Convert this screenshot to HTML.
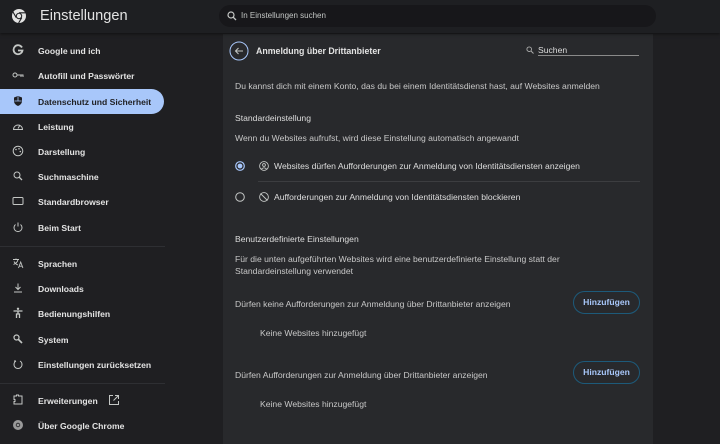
<!DOCTYPE html>
<html><head><meta charset="utf-8"><style>
*{margin:0;padding:0;box-sizing:border-box}
body{width:720px;height:444px;overflow:hidden;background:#1f1f22;font-family:"Liberation Sans",sans-serif;color:#e3e3e3;position:relative}
.hdr{position:absolute;left:0;top:0;width:720px;height:33px;background:#1e1f22;box-shadow:0 1px 3px rgba(0,0,0,.5);z-index:2}
.title{position:absolute;left:40px;top:8px;font-size:14.6px;color:#e3e3e3}
.search{position:absolute;left:219px;top:5px;width:437px;height:22px;border-radius:11px;background:#17171a}
.search span{position:absolute;left:22px;top:6px;font-size:8px;color:#c4c7c5}
.nav{position:absolute;left:0;top:33px;width:166px}
.it{position:absolute;left:0;height:25px;width:164px;font-size:8.6px;font-weight:bold;color:#e3e3e3}
.it .t{position:absolute;left:38px;top:8px}
.it svg{position:absolute;left:12px;top:6px}
.sel{background:#a8c7fa;border-radius:0 13px 13px 0;color:#1f1f22}
.sep{position:absolute;left:0;width:165px;height:1px;background:#2e2f33}
.card{position:absolute;left:223px;top:34px;width:430px;height:410px;background:#28292c}
.c{position:absolute;font-size:8.6px;color:#c8c8c8;white-space:nowrap}
.btn{position:absolute;left:573px;width:67px;height:23px;border:1px solid #1d5a7a;border-radius:12px;color:#a8c7fa;font-size:8.6px;font-weight:bold;text-align:center;line-height:21px}
</style></head><body>
<div class="hdr">
<svg style="position:absolute;left:11px;top:8px" width="16" height="16" viewBox="0 0 16 16"><circle cx="8" cy="8" r="7" fill="#e3e3e3"/><circle cx="8" cy="8" r="3.2" fill="#1e1f22"/><circle cx="8" cy="8" r="2.2" fill="#e3e3e3"/><path d="M8 4.8h6.5M5.2 9.6L2 4M10.8 9.6L7.6 15" stroke="#1e1f22" stroke-width="1.1"/></svg>
<div class="title">Einstellungen</div>
<div class="search"><svg style="position:absolute;left:8px;top:6px" width="10" height="10" viewBox="0 0 10 10"><circle cx="4" cy="4" r="3" fill="none" stroke="#c4c7c5" stroke-width="1.2"/><path d="M6.2 6.2L9 9" stroke="#c4c7c5" stroke-width="1.3"/></svg><span>In Einstellungen suchen</span></div>
</div>
<div class="nav">
<div class="it" style="top:5px"><svg width="12" height="12" viewBox="0 0 12 12"><path d="M10 3.5A4.5 4.5 0 1 0 10.5 6.5H6" fill="none" stroke="#c4c7c5" stroke-width="1.8"/></svg><span class="t">Google und ich</span></div>
<div class="it" style="top:30px"><svg width="12" height="12" viewBox="0 0 12 12"><circle cx="3" cy="6" r="2" fill="none" stroke="#c4c7c5"/><path d="M5 6h6.5M9 6v2M11 6v2" stroke="#c4c7c5"/></svg><span class="t">Autofill und Passwörter</span></div>
<div class="it sel" style="top:56px"><svg width="12" height="12" viewBox="0 0 12 12"><path d="M6 1L10 2.5V6c0 2.5-2 4.3-4 5C4 10.3 2 8.5 2 6V2.5z" fill="#1f1f22"/><path d="M6 1.5V6H9.6M6 6H2.4" stroke="#a8c7fa" stroke-width=".8" fill="none"/></svg><span class="t">Datenschutz und Sicherheit</span></div>
<div class="it" style="top:81px"><svg width="12" height="12" viewBox="0 0 12 12"><path d="M1.5 9.5a4.5 4.5 0 1 1 9 0z" fill="none" stroke="#c4c7c5"/><path d="M6 8.5L8 5" stroke="#c4c7c5"/></svg><span class="t">Leistung</span></div>
<div class="it" style="top:106px"><svg width="12" height="12" viewBox="0 0 12 12"><circle cx="6" cy="6" r="4.8" fill="none" stroke="#c4c7c5"/><circle cx="4" cy="4.5" r=".8" fill="#c4c7c5"/><circle cx="7" cy="3.8" r=".8" fill="#c4c7c5"/><circle cx="8.3" cy="6.5" r=".8" fill="#c4c7c5"/></svg><span class="t">Darstellung</span></div>
<div class="it" style="top:131px"><svg width="12" height="12" viewBox="0 0 12 12"><circle cx="5" cy="5" r="3" fill="none" stroke="#c4c7c5"/><path d="M7.2 7.2L10 10" stroke="#c4c7c5" stroke-width="1.3"/></svg><span class="t">Suchmaschine</span></div>
<div class="it" style="top:156px"><svg width="12" height="12" viewBox="0 0 12 12"><rect x="1" y="2.5" width="10" height="7" rx="1" fill="none" stroke="#c4c7c5"/></svg><span class="t">Standardbrowser</span></div>
<div class="it" style="top:182px"><svg width="12" height="12" viewBox="0 0 12 12"><path d="M3.5 3.5a4 4 0 1 0 5 0M6 1.5v4" fill="none" stroke="#c4c7c5"/></svg><span class="t">Beim Start</span></div>
<div class="sep" style="top:213px"></div>
<div class="it" style="top:218px"><svg width="12" height="12" viewBox="0 0 12 12"><path d="M1 2.5h6M4 1.5v1M2 4.5c1 2 2.5 3 4 3.5M6 2.5C5.5 5 4 6.5 1.5 7.5M6.5 11l2.2-6 2.2 6M7.3 9.2h2.8" fill="none" stroke="#c4c7c5" stroke-width=".9"/></svg><span class="t">Sprachen</span></div>
<div class="it" style="top:243px"><svg width="12" height="12" viewBox="0 0 12 12"><path d="M6 1.5v6M3.5 5L6 7.5 8.5 5M2 10h8" fill="none" stroke="#c4c7c5"/></svg><span class="t">Downloads</span></div>
<div class="it" style="top:268px"><svg width="12" height="12" viewBox="0 0 12 12"><circle cx="6" cy="1.8" r="1.2" fill="#c4c7c5"/><path d="M1.5 4h9M6 4v3.5M4.5 11V7h3v4" fill="none" stroke="#c4c7c5" stroke-width="1.3"/></svg><span class="t">Bedienungshilfen</span></div>
<div class="it" style="top:294px"><svg width="12" height="12" viewBox="0 0 12 12"><circle cx="4.5" cy="4.5" r="2.5" fill="none" stroke="#c4c7c5" stroke-width="1.2"/><path d="M6.5 6.5L10 10" stroke="#c4c7c5" stroke-width="1.6"/></svg><span class="t">System</span></div>
<div class="it" style="top:319px"><svg width="12" height="12" viewBox="0 0 12 12"><path d="M4 3a4 4 0 1 0 4 0M4 3H2" fill="none" stroke="#c4c7c5"/></svg><span class="t">Einstellungen zurücksetzen</span></div>
<div class="sep" style="top:350px"></div>
<div class="it" style="top:355px"><svg width="12" height="12" viewBox="0 0 12 12"><path d="M2 2h2.5v-1h2v1H10v8H2V7.5h1v-2H2z" fill="none" stroke="#c4c7c5"/></svg><span class="t">Erweiterungen</span><svg style="left:108px" width="12" height="12" viewBox="0 0 12 12"><path d="M5 1.5H1.5v9h9V7M7 1.5h3.5V5M10.5 1.5L5.5 6.5" fill="none" stroke="#c4c7c5"/></svg></div>
<div class="it" style="top:380px"><svg width="12" height="12" viewBox="0 0 12 12"><circle cx="6" cy="6" r="5" fill="#9a9a9a"/><circle cx="6" cy="6" r="2.2" fill="#1f1f22"/><circle cx="6" cy="6" r="1.4" fill="#9a9a9a"/></svg><span class="t">Über Google Chrome</span></div>
</div>
<div class="card"></div>
<svg style="position:absolute;left:229px;top:41px" width="20" height="20" viewBox="0 0 20 20"><circle cx="10" cy="10" r="9" fill="none" stroke="#a8c7fa" stroke-width="1"/><path d="M14 10H6.5M9.5 7L6.5 10l3 3" fill="none" stroke="#c4c7c5" stroke-width="1"/></svg>
<div class="c" style="left:256px;top:46px;font-size:8.8px;color:#e3e3e3;font-weight:bold">Anmeldung über Drittanbieter</div>
<svg style="position:absolute;left:526px;top:46px" width="8" height="8" viewBox="0 0 8 8"><circle cx="3.2" cy="3.2" r="2.3" fill="none" stroke="#aaa" stroke-width=".9"/><path d="M5 5l2.5 2.5" stroke="#aaa"/></svg>
<div class="c" style="left:538px;top:45px;color:#ddd">Suchen</div>
<div style="position:absolute;left:538px;top:55px;width:101px;height:1px;background:#8a8a8a"></div>
<div class="c" style="left:235px;top:81px">Du kannst dich mit einem Konto, das du bei einem Identitätsdienst hast, auf Websites anmelden</div>
<div class="c" style="left:235px;top:113px;color:#ddd">Standardeinstellung</div>
<div class="c" style="left:235px;top:133px">Wenn du Websites aufrufst, wird diese Einstellung automatisch angewandt</div>
<svg style="position:absolute;left:235px;top:161px" width="10" height="10"><circle cx="5" cy="5" r="4.3" fill="none" stroke="#a8c7fa" stroke-width="1.2"/><circle cx="5" cy="5" r="2.4" fill="#a8c7fa"/></svg>
<svg style="position:absolute;left:259px;top:161px" width="10" height="10"><circle cx="5" cy="5" r="4.4" fill="none" stroke="#c4c7c5" stroke-width=".9"/><circle cx="5" cy="4" r="1.4" fill="none" stroke="#c4c7c5" stroke-width=".9"/><path d="M2.5 8c1.5-1.5 3.5-1.5 5 0" fill="none" stroke="#c4c7c5" stroke-width=".9"/></svg>
<div class="c" style="left:274px;top:161px;color:#ddd">Websites dürfen Aufforderungen zur Anmeldung von Identitätsdiensten anzeigen</div>
<div style="position:absolute;left:258px;top:181px;width:382px;height:1px;background:#3c3d40"></div>
<svg style="position:absolute;left:235px;top:192px" width="10" height="10"><circle cx="5" cy="5" r="4.3" fill="none" stroke="#c4c7c5" stroke-width="1"/></svg>
<svg style="position:absolute;left:259px;top:192px" width="10" height="10"><circle cx="5" cy="5" r="4.4" fill="none" stroke="#c4c7c5" stroke-width=".9"/><path d="M1.5 1.5l7 7" stroke="#c4c7c5" stroke-width=".9"/></svg>
<div class="c" style="left:274px;top:192px;color:#ddd">Aufforderungen zur Anmeldung von Identitätsdiensten blockieren</div>
<div class="c" style="left:235px;top:234px;color:#ddd">Benutzerdefinierte Einstellungen</div>
<div class="c" style="left:235px;top:254px">Für die unten aufgeführten Websites wird eine benutzerdefinierte Einstellung statt der</div>
<div class="c" style="left:235px;top:266px">Standardeinstellung verwendet</div>
<div class="c" style="left:235px;top:299px">Dürfen keine Aufforderungen zur Anmeldung über Drittanbieter anzeigen</div>
<div class="btn" style="top:291px">Hinzufügen</div>
<div class="c" style="left:260px;top:328px">Keine Websites hinzugefügt</div>
<div class="c" style="left:235px;top:370px">Dürfen Aufforderungen zur Anmeldung über Drittanbieter anzeigen</div>
<div class="btn" style="top:361px">Hinzufügen</div>
<div class="c" style="left:260px;top:399px">Keine Websites hinzugefügt</div>
</body></html>
